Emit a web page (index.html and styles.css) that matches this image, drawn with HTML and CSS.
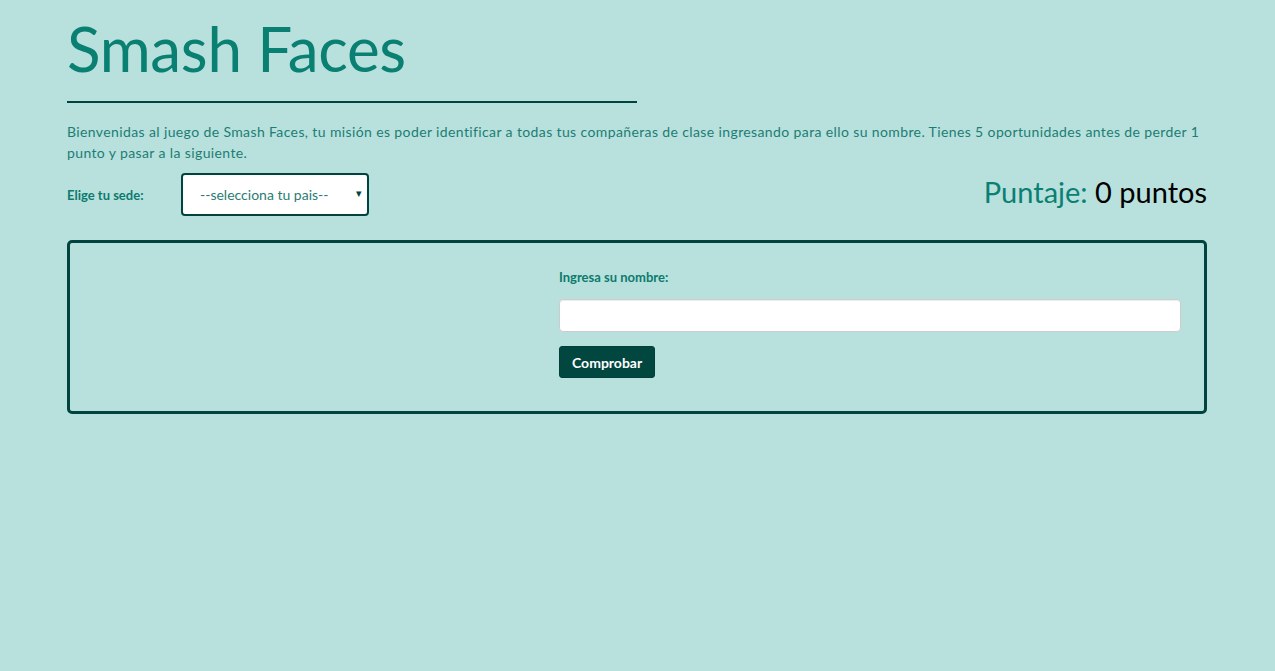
FILE: index.html
```html
<!DOCTYPE html>
<html lang="es">
<head>
<meta charset="utf-8">
<title>Smash Faces</title>
<link rel="stylesheet" href="styles.css">
</head>
<body>
<div class="container">
  <header class="header">
    <h1 class="title">Smash Faces</h1>
    <hr class="rule">
    <p class="intro">Bienvenidas al juego de Smash Faces, tu misión es poder identificar a todas tus compañeras de clase ingresando para ello su nombre. Tienes 5 oportunidades antes de perder 1 punto y pasar a la siguiente.</p>
  </header>
  <div class="controls">
    <div class="sede">
      <label class="sede-label" for="sede">Elige tu sede:</label>
      <div class="select-wrap">
        <select id="sede" class="select">
          <option>--selecciona tu pais--</option>
        </select>
        <span class="arrow">▾</span>
      </div>
    </div>
    <div class="score"><span class="score-label">Puntaje:</span> <span class="score-value">0 puntos</span></div>
  </div>
  <section class="game">
    <div class="photo"></div>
    <form class="answer">
      <label class="answer-label" for="nombre">Ingresa su nombre:</label>
      <input id="nombre" class="answer-input" type="text">
      <button type="button" class="btn">Comprobar</button>
    </form>
  </section>
</div>
</body>
</html>
```

FILE: styles.css
```css
* { box-sizing: border-box; }
html, body { margin: 0; padding: 0; }
body {
  background: #b8e1dd;
  font-family: Lato, "Open Sans", sans-serif;
  color: #137a70;
}
.container {
  width: 1170px;
  margin: 0 0 0 52px;
  padding: 0 15px;
}
.title {
  margin: 10px 0 0;
  font-size: 62px;
  font-weight: 400;
  line-height: 76px;
  color: #0a8073;
  letter-spacing: -0.3px;
}
.rule {
  width: 570px;
  margin: 15px 0 0;
  border: 0;
  border-top: 2px solid #01443f;
  height: 0;
}
.intro {
  margin: 18px 0 0;
  font-size: 14px;
  line-height: 21px;
  color: #1c7d74;
  letter-spacing: 0.38px;
}
.controls {
  display: flex;
  justify-content: space-between;
  align-items: center;
  margin-top: 10px;
}
.sede {
  display: flex;
  align-items: center;
}
.sede-label {
  font-size: 13px;
  font-weight: 700;
  color: #0d7a6e;
  width: 114px;
}
.select-wrap {
  position: relative;
  width: 188px;
  height: 43px;
}
.select {
  width: 100%;
  height: 100%;
  appearance: none;
  -webkit-appearance: none;
  background: #fff;
  border: 2px solid #01443f;
  border-radius: 4px;
  padding: 0 0 0 17px;
  font-family: Lato, "Open Sans", sans-serif;
  font-size: 14px;
  color: #2a7c74;
}
.arrow {
  position: absolute;
  right: 7px;
  top: 13px;
  font-size: 11px;
  color: #01443f;
  pointer-events: none;
}
.score {
  font-size: 29px;
  line-height: 36px;
  margin-bottom: 6px;
}
.score-label { color: #0a8073; }
.score-value { color: #000; }
.game {
  display: flex;
  margin-top: 24px;
  border: 3px solid #01443f;
  border-radius: 5px;
  min-height: 174px;
}
.photo {
  flex: 0 0 489px;
}
.answer {
  flex: 1;
  display: flex;
  flex-direction: column;
  align-items: flex-start;
  padding: 25px 23px 30px 0;
}
.answer-label {
  font-size: 13px;
  font-weight: 700;
  color: #0d7a6e;
  line-height: 18px;
}
.answer-input {
  width: 100%;
  height: 33px;
  margin-top: 13px;
  border: 1px solid #cccccc;
  border-radius: 4px;
  background: #fff;
  box-shadow: inset 0 1px 1px rgba(0,0,0,0.075);
}
.btn {
  margin-top: 14px;
  height: 32px;
  padding: 0 12px;
  background: #01463f;
  border: 1px solid #01403a;
  border-radius: 3px;
  color: #fff;
  font-family: Lato, "Open Sans", sans-serif;
  font-size: 14px;
  font-weight: 700;
}
```
